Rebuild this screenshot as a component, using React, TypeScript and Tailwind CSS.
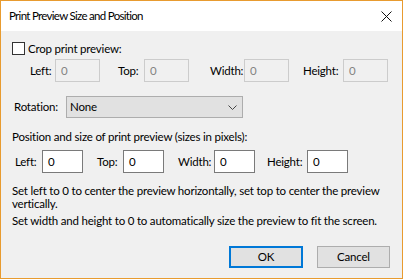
import { useState } from "react";

const font = { fontFamily: 'Lato, "Liberation Sans", Arial, sans-serif' };

const DisabledBox = ({ w }: { w: string }) => (
  <div className={`${w} h-[23px] border border-[#cccccc] bg-[#f0f0f0] pl-[5px] flex items-center text-[#838383]`}>
    0
  </div>
);

const Box = ({ w }: { w: string }) => (
  <div className={`${w} h-[23px] border border-[#7a7a7a] bg-white pl-[5px] flex items-center text-black`}>
    0
  </div>
);

export default function App() {
  const [crop, setCrop] = useState(false);

  return (
    <div
      className="w-[403px] h-[279px] border border-[#e89b2f] flex flex-col text-[11.5px] tracking-[-0.2px] text-black select-none"
      style={font}
    >
      <div className="h-[30px] bg-white flex items-center justify-between pl-[8px] pr-[10px] shrink-0">
        <span className="leading-none tracking-[-0.7px]">Print Preview Size and Position</span>
        <svg width="11" height="11" viewBox="0 0 11 11" className="mt-[1px]">
          <path d="M0.5 0.5 L10.5 10.5 M10.5 0.5 L0.5 10.5" stroke="#111" strokeWidth="1" fill="none" />
        </svg>
      </div>

      <div className="flex-1 bg-[#f0f0f0] flex flex-col">
        <div className="mt-[11px] h-[13px] flex items-center pl-[11px]">
          <button
            onClick={() => setCrop(!crop)}
            className="w-[13px] h-[13px] border border-[#333333] bg-white"
          />
          <span className="ml-[3px] leading-none">Crop print preview:</span>
        </div>

        <div className="mt-[4px] h-[23px] flex items-center pl-[29px]">
          <span className="w-[25px]">Left:</span>
          <DisabledBox w="w-[45px]" />
          <span className="ml-[18px] w-[26px]">Top:</span>
          <DisabledBox w="w-[45px]" />
          <span className="ml-[21px] w-[34px]">Width:</span>
          <DisabledBox w="w-[45px]" />
          <span className="ml-[14px] w-[40px]">Height:</span>
          <DisabledBox w="w-[45px]" />
        </div>

        <div className="mt-[14px] h-[22px] flex items-center pl-[13px]">
          <span className="w-[52px]">Rotation:</span>
          <div className="w-[177px] h-[22px] border border-[#adadad] bg-[#e1e1e1] flex items-center justify-between pl-[3px] pr-[5px]">
            <span>None</span>
            <svg width="9" height="5" viewBox="0 0 9 5">
              <path d="M0.5 0.5 L4.5 4.5 L8.5 0.5" stroke="#444" strokeWidth="1" fill="none" />
            </svg>
          </div>
        </div>

        <div className="mt-[11px] h-[15px] flex items-center pl-[11px]">
          Position and size of print preview (sizes in pixels):
        </div>

        <div className="mt-[6px] h-[23px] flex items-center pl-[14px]">
          <span className="w-[27px]">Left:</span>
          <Box w="w-[41px]" />
          <span className="ml-[14px] w-[26px]">Top:</span>
          <Box w="w-[41px]" />
          <span className="ml-[14px] w-[36px]">Width:</span>
          <Box w="w-[41px]" />
          <span className="ml-[12px] w-[40px]">Height:</span>
          <Box w="w-[41px]" />
        </div>

        <p className="mt-[11px] pl-[11px] leading-[13px] whitespace-nowrap">
          Set left to 0 to center the preview horizontally, set top to center the preview
          <br />
          vertically.
        </p>
        <p className="mt-[4px] pl-[11px] leading-[13px] whitespace-nowrap">
          Set width and height to 0 to automatically size the preview to fit the screen.
        </p>

        <div className="mt-[19px] flex justify-end pr-[12px] gap-[14px]">
          <button className="w-[74px] h-[22px] border-2 border-[#0078d7] bg-[#e1e1e1]">OK</button>
          <button className="w-[73px] h-[22px] border border-[#adadad] bg-[#e1e1e1]">Cancel</button>
        </div>
      </div>
    </div>
  );
}
